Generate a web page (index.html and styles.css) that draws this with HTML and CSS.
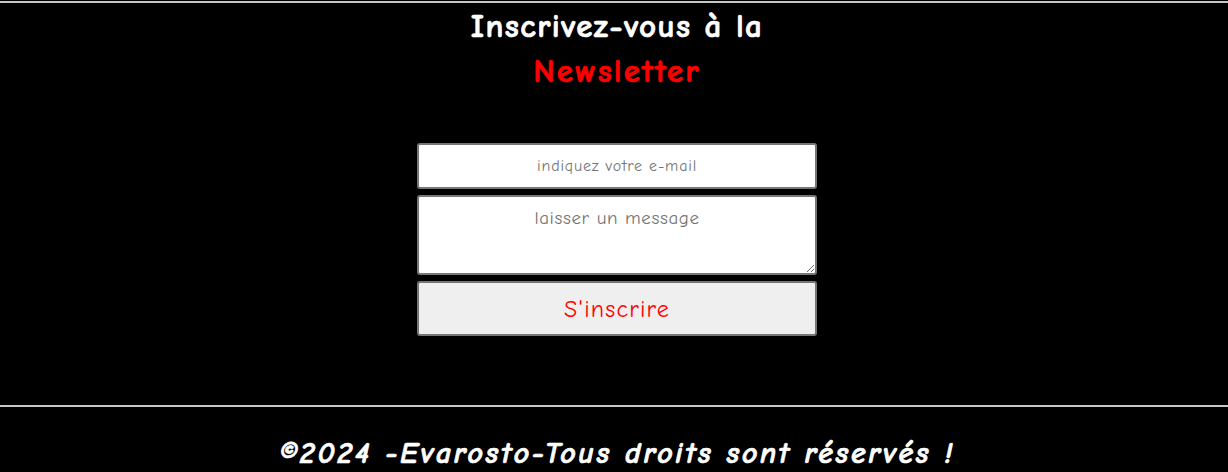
FILE: index.html
```html
<!DOCTYPE html>
<html lang="fr">
<head>
<meta charset="utf-8">
<title>Newsletter</title>
<link rel="stylesheet" href="styles.css">
</head>
<body>
<section class="newsletter">
  <h2 class="title">Inscrivez-vous à la<br><span class="red">Newsletter</span></h2>
  <form class="form">
    <input class="email" type="email" placeholder="indiquez votre e-mail">
    <textarea class="message" placeholder="laisser un message"></textarea>
    <button class="submit" type="button">S'inscrire</button>
  </form>
</section>
<footer class="footer">
  <p class="copy">©2024 -Evarosto-Tous droits sont réservés !</p>
</footer>
</body>
</html>
```
FILE: styles.css
```css
html, body {
  margin: 0;
  padding: 0;
  background: #000;
  height: 100%;
  overflow: hidden;
}
body {
  font-family: "Comic Sans MS", "Comic Neue", cursive, sans-serif;
  color: #fff;
}
.newsletter {
  margin-top: 1px;
  border-top: 2px solid #c8c8c8;
  padding-left: 6px;
  height: 404px;
  box-sizing: border-box;
}
.title {
  margin: 1px 0 0;
  text-align: center;
  font-size: 33px;
  line-height: 45px;
  letter-spacing: 1.4px;
  font-weight: bold;
  -webkit-text-stroke: 0.7px currentColor;
}
.red {
  color: #ff0000;
  letter-spacing: 2.1px;
}
.form {
  margin-top: 49px;
  display: flex;
  flex-direction: column;
  align-items: center;
  gap: 6px;
}
.email, .message, .submit {
  width: 400px;
  box-sizing: border-box;
  border: 2px solid #767676;
  border-radius: 3px;
  font-family: inherit;
  text-align: center;
  margin: 0;
}
.email {
  height: 46px;
  font-size: 16px;
  letter-spacing: 0.8px;
  background: #fff;
}
.message {
  height: 80px;
  font-size: 19px;
  letter-spacing: 0.6px;
  padding-top: 10px;
  background: #fff;
  display: block;
}
.email::placeholder, .message::placeholder {
  color: #757575;
}
.submit {
  height: 55px;
  font-size: 24px;
  letter-spacing: 1.2px;
  color: #ff0000;
  background: #efefef;
  border-color: #767676;
}
.footer {
  border-top: 2px solid #c8c8c8;
  padding-left: 6px;
}
.copy {
  margin: 29px 0 0;
  text-align: center;
  font-size: 30px;
  letter-spacing: 2.6px;
  font-weight: bold;
  font-style: italic;
  -webkit-text-stroke: 0.7px currentColor;
}
```
